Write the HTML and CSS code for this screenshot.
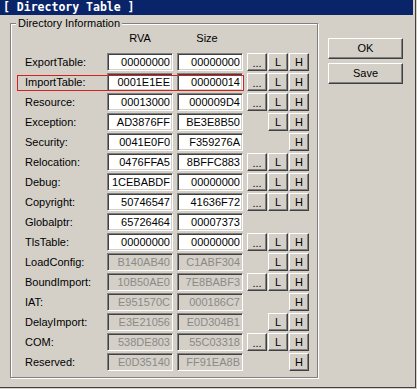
FILE: index.html
```html
<!DOCTYPE html>
<html lang="en">
<head>
  <meta charset="UTF-8" />
  <title>Directory Table</title>
  <link rel="stylesheet" href="styles.css">
</head>
<body>

<div class="window">
  <div class="titlebar">[ Directory Table ]</div>

  <div class="content">
    <fieldset class="group">
      <legend>Directory Information</legend>

      <div class="head"><span>RVA</span><span class="size-head">Size</span></div>

      <div class="row">
        <label>ExportTable:</label>
        <div class="field">00000000</div><div class="field">00000000</div>
        <div class="btns"><button class="btn dots">...</button><button class="btn">L</button><button class="btn">H</button></div>
      </div>
      <div class="row">
        <div class="mark"></div>
        <label>ImportTable:</label>
        <div class="field">0001E1EE</div><div class="field">00000014</div>
        <div class="btns"><button class="btn dots">...</button><button class="btn">L</button><button class="btn">H</button></div>
      </div>
      <div class="row">
        <label>Resource:</label>
        <div class="field">00013000</div><div class="field">000009D4</div>
        <div class="btns"><button class="btn dots">...</button><button class="btn">L</button><button class="btn">H</button></div>
      </div>
      <div class="row">
        <label>Exception:</label>
        <div class="field">AD3876FF</div><div class="field">BE3E8B50</div>
        <div class="btns"><span class="slot"></span><button class="btn">L</button><button class="btn">H</button></div>
      </div>
      <div class="row">
        <label>Security:</label>
        <div class="field">0041E0F0</div><div class="field">F359276A</div>
        <div class="btns"><span class="slot"></span><span class="slot"></span><button class="btn">H</button></div>
      </div>
      <div class="row">
        <label>Relocation:</label>
        <div class="field">0476FFA5</div><div class="field">8BFFC883</div>
        <div class="btns"><button class="btn dots">...</button><button class="btn">L</button><button class="btn">H</button></div>
      </div>
      <div class="row">
        <label>Debug:</label>
        <div class="field">1CEBABDF</div><div class="field">00000000</div>
        <div class="btns"><button class="btn dots">...</button><button class="btn">L</button><button class="btn">H</button></div>
      </div>
      <div class="row">
        <label>Copyright:</label>
        <div class="field">50746547</div><div class="field">41636F72</div>
        <div class="btns"><button class="btn dots">...</button><button class="btn">L</button><button class="btn">H</button></div>
      </div>
      <div class="row">
        <label>Globalptr:</label>
        <div class="field">65726464</div><div class="field">00007373</div>
      </div>
      <div class="row">
        <label>TlsTable:</label>
        <div class="field">00000000</div><div class="field">00000000</div>
        <div class="btns"><button class="btn dots">...</button><button class="btn">L</button><button class="btn">H</button></div>
      </div>
      <div class="row off">
        <label>LoadConfig:</label>
        <div class="field">B140AB40</div><div class="field">C1ABF304</div>
        <div class="btns"><span class="slot"></span><button class="btn">L</button><button class="btn">H</button></div>
      </div>
      <div class="row off">
        <label>BoundImport:</label>
        <div class="field">10B50AE0</div><div class="field">7E8BABF3</div>
        <div class="btns"><button class="btn dots">...</button><button class="btn">L</button><button class="btn">H</button></div>
      </div>
      <div class="row off">
        <label>IAT:</label>
        <div class="field">E951570C</div><div class="field">000186C7</div>
        <div class="btns"><span class="slot"></span><span class="slot"></span><button class="btn">H</button></div>
      </div>
      <div class="row off">
        <label>DelayImport:</label>
        <div class="field">E3E21056</div><div class="field">E0D304B1</div>
        <div class="btns"><span class="slot"></span><button class="btn">L</button><button class="btn">H</button></div>
      </div>
      <div class="row off">
        <label>COM:</label>
        <div class="field">538DE803</div><div class="field">55C03318</div>
        <div class="btns"><button class="btn dots">...</button><button class="btn">L</button><button class="btn">H</button></div>
      </div>
      <div class="row off">
        <label>Reserved:</label>
        <div class="field">E0D35140</div><div class="field">FF91EA8B</div>
        <div class="btns"><span class="slot"></span><span class="slot"></span><button class="btn">H</button></div>
      </div>
    </fieldset>

    <div class="side">
      <button class="btn wide">OK</button>
      <button class="btn wide">Save</button>
    </div>
  </div>
</div>

</body>
</html>
```

FILE: styles.css
```css
body {
  margin: 0;
  background-color: #d4d0c8;
  font-family: "Liberation Sans", Arial, sans-serif;
  font-size: 11px;
  color: #000;
}
.window {
  width: 416px;
  height: 388px;
  box-sizing: border-box;
  padding-right: 2px;
  border-right: 1px solid #404040;
  border-bottom: 1px solid #404040;
}
.titlebar {
  height: 15px;
  line-height: 15px;
  padding-left: 3px;
  background-color: #0a246a;
  color: #fff;
  font-family: "DejaVu Sans Mono", monospace;
  font-weight: bold;
  font-size: 11.5px;
  white-space: pre;
}
.content {
  display: flex;
  align-items: flex-start;
}

/* group box with etched frame */
.group {
  margin: 2px 0 0 10px;
  padding: 1px 0 0 14px;
  width: 308px;
  height: 361px;
  min-width: 0;
  box-sizing: border-box;
  border: 1px solid #808080;
  box-shadow: 1px 1px 0 #fff, inset 1px 1px 0 #fff;
}
.group legend {
  margin-left: -9px;
  padding: 0 2px;
  line-height: 13px;
  background-color: #d4d0c8;
}
.head {
  display: flex;
  height: 14px;
  line-height: 14px;
  margin-bottom: 8px;
  padding-left: 82px;
}
.head span {
  width: 66px;
  text-align: center;
}
.head .size-head {
  margin-left: 4px;
  padding-right: 6px;
  box-sizing: border-box;
}

.row {
  position: relative;
  display: flex;
  align-items: center;
  height: 18px;
  margin-bottom: 2px;
}
.row label {
  width: 82px;
}
.field {
  width: 66px;
  height: 18px;
  box-sizing: border-box;
  padding-right: 2px;
  line-height: 16px;
  text-align: right;
  background-color: #fff;
  border: 1px solid;
  border-color: #808080 #fff #fff #808080;
  box-shadow: inset 1px 1px 0 #404040, inset -1px -1px 0 #d4d0c8;
}
.field + .field {
  margin-left: 4px;
}
.off .field {
  background-color: #d4d0c8;
  color: #8a8a8a;
}
.btns {
  display: flex;
  gap: 1px;
  margin-left: 4px;
}
.slot {
  width: 20px;
  height: 18px;
}
.btn {
  width: 20px;
  height: 18px;
  box-sizing: border-box;
  padding: 0;
  margin: 0;
  font: inherit;
  color: #000;
  line-height: 16px;
  text-align: center;
  background-color: #d4d0c8;
  border: 1px solid;
  border-color: #fff #404040 #404040 #fff;
  box-shadow: inset -1px -1px 0 #808080;
}
.btn.dots {
  line-height: 18px;
}

/* red highlight drawn over the ImportTable row */
.mark {
  position: absolute;
  left: -8px;
  top: 2px;
  width: 227px;
  height: 16px;
  box-sizing: border-box;
  border: 1px solid #d42020;
  z-index: 1;
}

.side {
  display: flex;
  flex-direction: column;
  gap: 4px;
  margin: 23px 0 0 10px;
}
.btn.wide {
  width: 75px;
  height: 21px;
  line-height: 19px;
}
```
